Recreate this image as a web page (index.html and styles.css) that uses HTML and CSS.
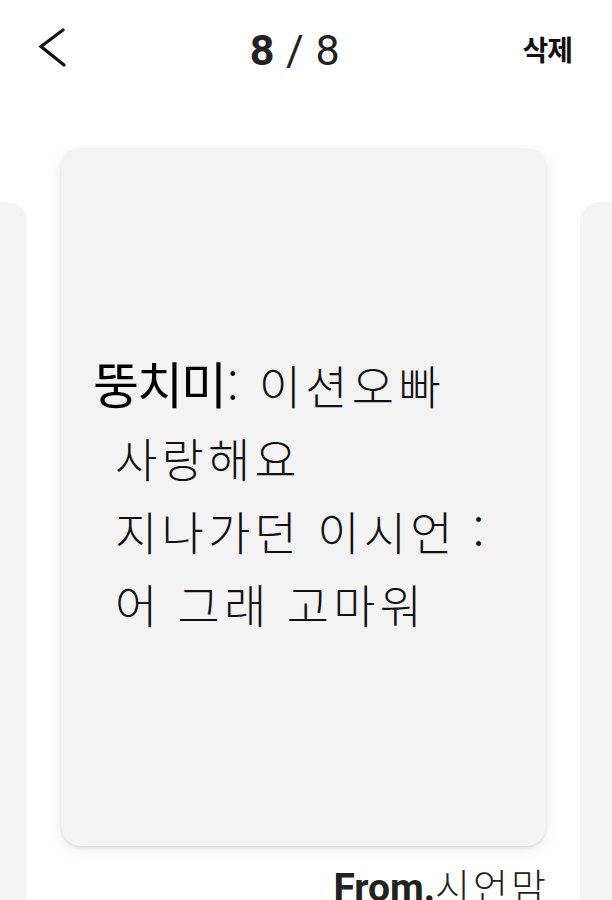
FILE: index.html
```html
<!DOCTYPE html>
<html lang="ko">
<head>
<meta charset="utf-8">
<link rel="stylesheet" href="styles.css">
</head>
<body>
<header class="topbar">
  <button class="back" aria-label="뒤로">
    <svg width="30" height="40" viewBox="0 0 30 40"><path d="M26 3 L4 19.5 L27 38" fill="none" stroke="#111" stroke-width="3.2" stroke-linecap="round" stroke-linejoin="miter"/></svg>
  </button>
  <div class="counter"><b>8</b> / 8</div>
  <button class="delete">삭제</button>
</header>
<main class="carousel">
  <section class="slide side">
    <div class="card"></div>
  </section>
  <section class="slide current">
    <div class="card">
      <p class="message"><span class="name">뚱치미</span>: 이션오빠<br>사랑해요<br>지나가던 이시언 :<br>어 그래 고마워</p>
    </div>
    <div class="from"><b>From.</b><span class="sender">시언맘</span></div>
  </section>
  <section class="slide side">
    <div class="card"></div>
  </section>
</main>
</body>
</html>
```

FILE: styles.css
```css
* { box-sizing: border-box; }
html, body { margin: 0; padding: 0; background: #fff; }
body {
  width: 612px;
  height: 900px;
  overflow: hidden;
  font-family: "Noto Sans CJK KR", "Noto Sans", sans-serif;
  color: #111;
}
.topbar {
  height: 100px;
  display: flex;
  align-items: center;
  justify-content: space-between;
  padding: 0 40px 0 37px;
}
.back {
  border: 0;
  background: none;
  padding: 0;
  width: 30px;
  height: 40px;
  display: flex;
  margin-top: -6px;
}
.counter {
  font-family: Roboto, "Liberation Sans", sans-serif;
  font-size: 43px;
  color: #222;
  word-spacing: 1px;
}
.counter b { font-weight: 700; }
.delete {
  border: 0;
  background: none;
  padding: 0;
  font-family: "Noto Sans CJK KR", sans-serif;
  font-weight: 700;
  font-size: 28px;
  letter-spacing: -1px;
  color: #111;
  margin-top: -2px;
}
.carousel {
  margin-top: 45px;
  padding-top: 3px;
  padding-right: 5px;
  height: 755px;
  overflow: hidden;
  display: flex;
  justify-content: center;
  align-items: flex-start;
  gap: 34px;
}
.slide {
  flex: 0 0 485px;
  width: 485px;
}
.card {
  height: 698px;
  background: #f3f3f3;
  border-radius: 20px;
  box-shadow: 0 2px 3px rgba(0,0,0,0.08), 0 3px 16px rgba(0,0,0,0.09);
  display: flex;
  align-items: center;
}
.side .card {
  margin-top: 54px;
  height: 760px;
  background: #f4f4f4;
  box-shadow: none;
}
.message {
  margin: -8px 0 0 0;
  padding: 0 0 0 54px;
  text-indent: -22px;
  font-size: 46px;
  line-height: 73px;
  font-weight: 300;
  letter-spacing: 4.2px;
  word-spacing: -1px;
  color: #111;
  white-space: nowrap;
}
.message .name {
  font-weight: 400;
  font-size: 50px;
  letter-spacing: -2px;
  margin-right: 2px;
  color: #000;
}
.from {
  margin-top: 16px;
  text-align: right;
  font-family: "Noto Sans CJK KR", sans-serif;
  font-weight: 300;
  font-size: 38px;
  line-height: 1.2;
  color: #222;
}
.from b {
  font-family: Roboto, "Liberation Sans", sans-serif;
  font-weight: 700;
  font-size: 39px;
}
.from .sender { letter-spacing: 3px; margin-right: -3px; }
```
